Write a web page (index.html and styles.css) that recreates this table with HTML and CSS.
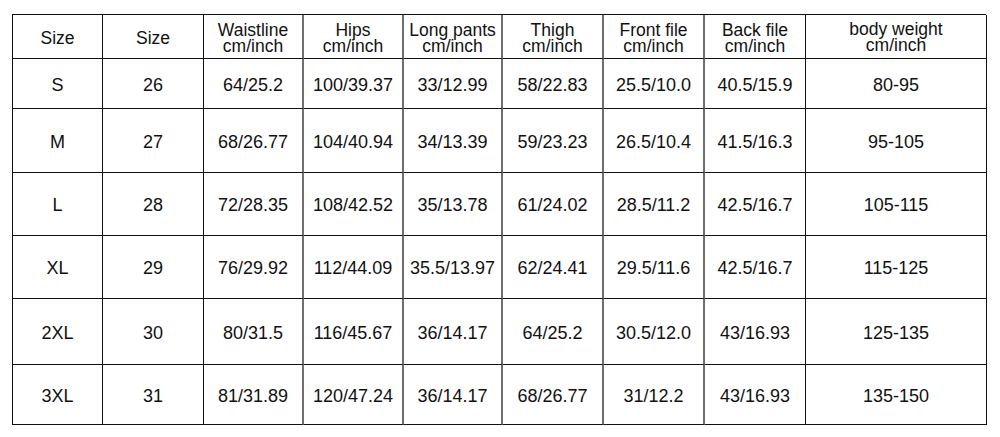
FILE: index.html
```html
<!DOCTYPE html>
<html lang="en">
<head>
<meta charset="utf-8">
<title>Size chart</title>
<link rel="stylesheet" href="styles.css">
</head>
<body>
<div class="chart" role="table">
  <div class="c hd" role="columnheader">Size</div>
  <div class="c hd" role="columnheader">Size</div>
  <div class="c hd g" role="columnheader"><span class="two">Waistline<br>cm/inch</span></div>
  <div class="c hd g" role="columnheader"><span class="two">Hips<br>cm/inch</span></div>
  <div class="c hd g" role="columnheader"><span class="two">Long pants<br>cm/inch</span></div>
  <div class="c hd g" role="columnheader"><span class="two">Thigh<br>cm/inch</span></div>
  <div class="c hd g" role="columnheader"><span class="two">Front file<br>cm/inch</span></div>
  <div class="c hd" role="columnheader"><span class="two">Back file<br>cm/inch</span></div>
  <div class="c hd" role="columnheader"><span class="two up">body weight<br>cm/inch</span></div>

  <div class="c">S</div><div class="c">26</div><div class="c g">64/25.2</div><div class="c g">100/39.37</div><div class="c g">33/12.99</div><div class="c g">58/22.83</div><div class="c g">25.5/10.0</div><div class="c">40.5/15.9</div><div class="c">80-95</div>

  <div class="c">M</div><div class="c">27</div><div class="c g">68/26.77</div><div class="c g">104/40.94</div><div class="c g">34/13.39</div><div class="c g">59/23.23</div><div class="c g">26.5/10.4</div><div class="c">41.5/16.3</div><div class="c">95-105</div>

  <div class="c">L</div><div class="c">28</div><div class="c g">72/28.35</div><div class="c g">108/42.52</div><div class="c g">35/13.78</div><div class="c g">61/24.02</div><div class="c g">28.5/11.2</div><div class="c">42.5/16.7</div><div class="c">105-115</div>

  <div class="c">XL</div><div class="c">29</div><div class="c g">76/29.92</div><div class="c g">112/44.09</div><div class="c g">35.5/13.97</div><div class="c g">62/24.41</div><div class="c g">29.5/11.6</div><div class="c">42.5/16.7</div><div class="c">115-125</div>

  <div class="c">2XL</div><div class="c">30</div><div class="c g">80/31.5</div><div class="c g">116/45.67</div><div class="c g">36/14.17</div><div class="c g">64/25.2</div><div class="c g">30.5/12.0</div><div class="c">43/16.93</div><div class="c">125-135</div>

  <div class="c">3XL</div><div class="c">31</div><div class="c g">81/31.89</div><div class="c g">120/47.24</div><div class="c g">36/14.17</div><div class="c g">68/26.77</div><div class="c g">31/12.2</div><div class="c">43/16.93</div><div class="c">135-150</div>
</div>
</body>
</html>
```

FILE: styles.css
```css
html, body {
  margin: 0;
  padding: 0;
  background: #ffffff;
}

body {
  padding: 14px 0 0 12px;
  font-family: "Liberation Sans", Arial, sans-serif;
  font-size: 18px;
  color: #111111;
}

.chart {
  display: grid;
  width: 974px;
  box-sizing: border-box;
  grid-template-columns: 90px 101px 100px 100px 99px 101px 101px 101px 181px;
  grid-template-rows: 44px 50px 64px 63px 63px 66px 60px;
  border-top: 1px solid #111;
  border-left: 1px solid #111;
}

.c {
  box-sizing: border-box;
  border-right: 1px solid #111;
  border-bottom: 1px solid #111;
  display: flex;
  align-items: center;
  justify-content: center;
  text-align: center;
  line-height: 20px;
  padding-top: 2px;
}

.c.g {
  border-right: 2px solid #6f6f6f;
}

.hd {
  padding-top: 3px;
  font-size: 17.5px;
}

.two {
  display: block;
  line-height: 16px;
}

.two.up {
  margin-top: -3px;
}
```
